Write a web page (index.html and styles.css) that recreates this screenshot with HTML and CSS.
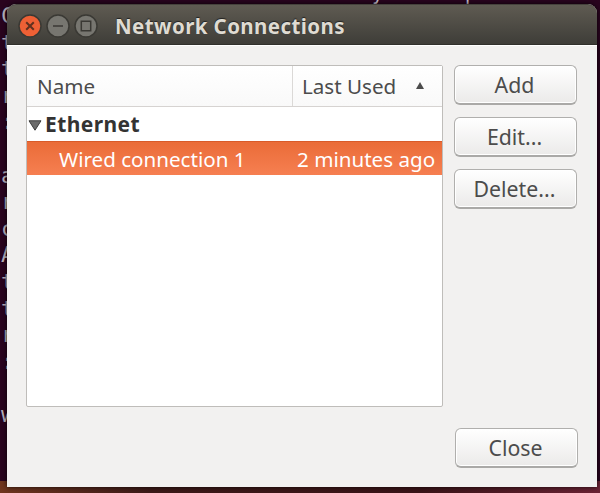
FILE: index.html
```
<!DOCTYPE html>
<html lang="en">
<head>
    <meta charset="utf-8">
    <title>Network Connections</title>
    <link rel="stylesheet" href="styles.css">
</head>
<body>
    <!-- terminal behind the window -->
    <pre class="terminal">C
t
t
r
:

a
r
c
A
t
t
r
:

w</pre>
    <span class="terminal-tail">y</span>
    <span class="terminal-tail second">p</span>

    <div class="window">
        <div class="titlebar">
            <div class="controls">
                <svg class="control close" viewBox="0 0 24 24">
                    <circle cx="12" cy="12" r="11"/>
                    <path d="M8.2 8.2l7.6 7.6M15.8 8.2l-7.6 7.6"/>
                </svg>
                <svg class="control" viewBox="0 0 24 24">
                    <circle cx="12" cy="12" r="11"/>
                    <path d="M7 12h10"/>
                </svg>
                <svg class="control" viewBox="0 0 24 24">
                    <circle cx="12" cy="12" r="11"/>
                    <path d="M7.3 7.3h9.4v9.4H7.3z"/>
                </svg>
            </div>
            <h1>Network Connections</h1>
        </div>

        <div class="content">
            <div class="list">
                <div class="row header">
                    <span class="name">Name</span>
                    <span class="used">Last Used</span>
                    <svg class="sort" viewBox="0 0 8 7"><path d="M4 0l4 7H0z"/></svg>
                </div>
                <div class="row group">
                    <svg class="arrow" viewBox="0 0 14 11"><path d="M1 .8h12L7 10.2z"/></svg>
                    <span>Ethernet</span>
                </div>
                <div class="row selected">
                    <span class="name">Wired connection 1</span>
                    <span class="used">2 minutes ago</span>
                </div>
            </div>
            <div class="buttons">
                <button class="add">Add</button>
                <button class="edit">Edit...</button>
                <button class="delete">Delete...</button>
            </div>
        </div>

        <div class="footer">
            <button class="close-button">Close</button>
        </div>
    </div>
</body>
</html>
```
FILE: styles.css
```
* {
    box-sizing: border-box;
}

body {
    margin: 0;
    width: 600px;
    height: 493px;
    padding: 4px 3px 6px 7px;
    overflow: hidden;
    position: relative;
    background: linear-gradient(#29041e 0, #29041e 481px, transparent 481px),
        linear-gradient(to right, #70361f, #3c1a18 25%, #3a1418 70%, #6b2335);
    font-family: "Noto Sans", "Open Sans", sans-serif;
    font-size: 20.6px;
    color: #4c4c4c;
}

.terminal {
    position: absolute;
    left: 1px;
    top: 3px;
    margin: 0;
    font: 22px/26.6px "DejaVu Sans Mono", monospace;
    color: #b9b2bd;
}

.terminal-tail {
    position: absolute;
    left: 372px;
    top: -18px;
    font: 19px/22px "DejaVu Sans Mono", monospace;
    color: #c9c2cd;
}

.terminal-tail.second {
    left: 465px;
}

.window {
    position: relative;
    height: 483px;
    border-radius: 9px 9px 0 0;
    background: #f2f1f0;
    box-shadow: 0 0 5px rgba(0, 0, 0, 0.8);
}

.titlebar {
    display: flex;
    align-items: center;
    height: 41px;
    padding: 2px 0 0 11px;
    border-top: 1px solid #45423c;
    border-bottom: 1px solid #31302b;
    border-radius: 9px 9px 0 0;
    background: linear-gradient(#5f5b52, #3e3d38);
}

.controls {
    display: flex;
    gap: 4px;
}

.control {
    width: 24px;
    height: 24px;
    fill: #777670;
    stroke: #3a3934;
    stroke-width: 1.5;
}

.control.close {
    fill: #ee6035;
}

.control.close path {
    stroke: #60301f;
    stroke-width: 2;
}

.control path {
    fill: none;
}

h1 {
    margin: 0 0 0 17px;
    font-size: 20.5px;
    line-height: 28px;
    letter-spacing: 0.4px;
    color: #dfdbd2;
    text-shadow: 0 -1px 1px #222;
}

.content {
    display: flex;
    align-items: flex-start;
    gap: 11px;
    padding: 19px 20px 0 19px;
    border-top: 1px solid #fff;
}

.list {
    width: 417px;
    height: 342px;
    border: 1px solid #bfbdba;
    border-radius: 2px;
    background: #fff;
}

.row {
    display: flex;
    align-items: center;
    height: 34px;
    white-space: nowrap;
}

.header {
    height: 41px;
    border-bottom: 1px solid #d6d3d1;
    background: linear-gradient(#fff, #f9f9f9);
}

.header .name {
    width: 266px;
    padding-left: 10px;
    border-right: 1px solid #dbd9d7;
    line-height: 40px;
}

.header .used {
    width: 97px;
    margin-left: 9px;
    line-height: 40px;
}

.sort {
    width: 8px;
    height: 7px;
    margin: -2px 0 0 17px;
    fill: #4c4c4c;
}

.group {
    font-size: 21px;
    font-weight: bold;
    letter-spacing: 0.4px;
    color: #333;
}

.arrow {
    width: 14px;
    height: 11px;
    margin: 2px 3px 0 1px;
    fill: #6b6b6b;
    stroke: #3c3c3c;
}

.selected {
    color: #fff;
    border-top: 1px solid #d85b2a;
    background: linear-gradient(#ea6c38, #f67f51);
}

.selected .name {
    width: 270px;
    padding-left: 32px;
}

.buttons {
    display: flex;
    flex-direction: column;
    gap: 12px;
}

button {
    display: block;
    width: 123px;
    height: 40px;
    padding: 0 2px 0 0;
    border: 1px solid #b0afad;
    border-bottom: 2px solid #aaa9a7;
    border-radius: 6px;
    background: linear-gradient(#fff, #ebeae9);
    box-shadow: inset 0 0 0 1px #fff;
    font: inherit;
    font-size: 21.3px;
    color: #4c4c4c;
}

.footer {
    display: flex;
    justify-content: flex-end;
    padding: 21px 19px 0 0;
}
```
